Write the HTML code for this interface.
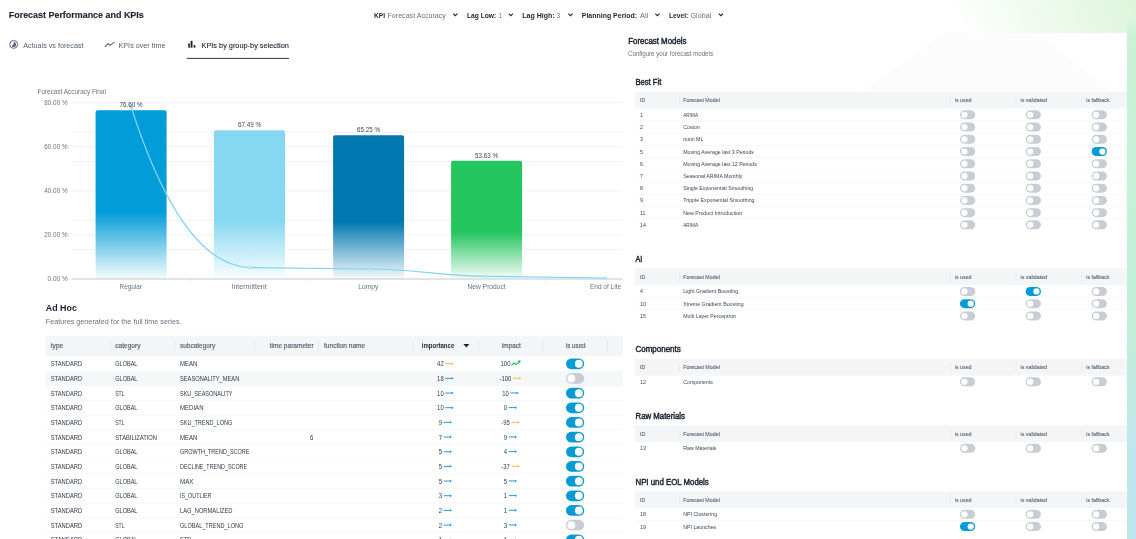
<!DOCTYPE html>
<html><head><meta charset="utf-8"><title>Forecast Performance and KPIs</title>
<style>
html,body{margin:0;padding:0}
body{width:1136px;height:539px;overflow:hidden;position:relative;font-family:"Liberation Sans", sans-serif;
background:#fff}
.band{position:absolute;left:900px;top:0;width:236px;height:33px;background:linear-gradient(68deg,#fff 0,#fff 24%,#ddf5da 100%)}
.strip{position:absolute;left:1127px;top:20px;width:9px;height:519px;
background:linear-gradient(to bottom, rgba(204,242,213,0) 0, #ccf2d5 14px, #c8f1d5 50px, #c3f0d8 250px, #c1ecdc 340px, #bfe6ee 430px, #bfe5f0 519px)}
.card{position:absolute;left:610px;top:32.8px;width:517px;height:520px;background:#fff}
.t{position:absolute;white-space:pre;line-height:1;}
.r{position:absolute}
svg.ov{position:absolute;left:0;top:0}
svg.tx{will-change:transform}
</style></head><body>
<div class="band"></div>
<div class="strip"></div>
<svg class="ov" width="1136" height="539" viewBox="0 0 1136 539">
<polygon points="944.5,33 1037,33 1112,91.5 862,91.5" fill="#fcfcfd"/>
</svg>

<svg class="ov" width="1136" height="539" viewBox="0 0 1136 539">
<defs><linearGradient id="g0" x1="0" y1="0" x2="0" y2="1"><stop offset="0" stop-color="#029cd8"/><stop offset="0.6" stop-color="#029cd8"/><stop offset="1" stop-color="#f7fcfe"/></linearGradient><linearGradient id="g1" x1="0" y1="0" x2="0" y2="1"><stop offset="0" stop-color="#86d7f1"/><stop offset="0.6" stop-color="#86d7f1"/><stop offset="1" stop-color="#fbfeff"/></linearGradient><linearGradient id="g2" x1="0" y1="0" x2="0" y2="1"><stop offset="0" stop-color="#0277b0"/><stop offset="0.6" stop-color="#0277b0"/><stop offset="1" stop-color="#f7fbfd"/></linearGradient><linearGradient id="g3" x1="0" y1="0" x2="0" y2="1"><stop offset="0" stop-color="#23c55e"/><stop offset="0.6" stop-color="#23c55e"/><stop offset="1" stop-color="#f8fdfa"/></linearGradient></defs>
<path d="M453.20 13.7 L455.30 15.7 L457.40 13.7" fill="none" stroke="#1c2330" stroke-width="1.1"/>
<path d="M508.70 13.7 L510.80 15.7 L512.90 13.7" fill="none" stroke="#1c2330" stroke-width="1.1"/>
<path d="M568.40 13.7 L570.50 15.7 L572.60 13.7" fill="none" stroke="#1c2330" stroke-width="1.1"/>
<path d="M655.30 13.7 L657.40 15.7 L659.50 13.7" fill="none" stroke="#1c2330" stroke-width="1.1"/>
<path d="M718.80 13.7 L720.90 15.7 L723.00 13.7" fill="none" stroke="#1c2330" stroke-width="1.1"/>
<rect x="186.90" y="57.90" width="102.10" height="0.95" fill="#232b3a"/>
<circle cx="13.65" cy="44.4" r="3.95" fill="none" stroke="#545f70" stroke-width="0.95"/><path d="M13.65 44.4 L13.65 41.9 A2.5 2.5 0 1 1 11.5 45.7 Z" fill="#545f70"/>
<path d="M105.3 46.6 L108.1 43.6 L110.2 45.3 L114.1 42.3" fill="none" stroke="#545f70" stroke-width="1.05" stroke-linejoin="round" stroke-linecap="round"/>
<rect x="188.2" y="43.4" width="1.6" height="4.3" fill="#1c2330"/><rect x="190.6" y="40.8" width="1.9" height="6.9" fill="#1c2330"/><rect x="193.7" y="45.0" width="1.6" height="2.7" fill="#1c2330"/>
<rect x="71.75" y="234.44" width="550.75" height="1.0" fill="#eef1f6"/>
<rect x="71.75" y="190.38" width="550.75" height="1.0" fill="#eef1f6"/>
<rect x="71.75" y="146.32" width="550.75" height="1.0" fill="#eef1f6"/>
<rect x="71.75" y="102.26" width="550.75" height="1.0" fill="#eef1f6"/>
<rect x="71.75" y="249.10" width="550.75" height="1.0" fill="#eef1f6"/>
<rect x="71.75" y="219.70" width="550.75" height="1.0" fill="#eef1f6"/>
<rect x="71.75" y="160.90" width="550.75" height="1.0" fill="#eef1f6"/>
<rect x="71.75" y="131.50" width="550.75" height="1.0" fill="#eef1f6"/>
<path d="M95.60 279.0 L95.60 112.25 Q95.60 110.25 97.60 110.25 L164.60 110.25 Q166.60 110.25 166.60 112.25 L166.60 279.0 Z" fill="url(#g0)"/>
<path d="M214.00 279.0 L214.00 132.32 Q214.00 130.32 216.00 130.32 L283.00 130.32 Q285.00 130.32 285.00 132.32 L285.00 279.0 Z" fill="url(#g1)"/>
<path d="M333.10 279.0 L333.10 137.25 Q333.10 135.25 335.10 135.25 L402.10 135.25 Q404.10 135.25 404.10 137.25 L404.10 279.0 Z" fill="url(#g2)"/>
<path d="M451.10 279.0 L451.10 162.85 Q451.10 160.85 453.10 160.85 L520.10 160.85 Q522.10 160.85 522.10 162.85 L522.10 279.0 Z" fill="url(#g3)"/>
<rect x="71.75" y="278.45" width="550.75" height="1.1" fill="#c9cdd3"/>
<rect x="189.85" y="279.0" width="0.8" height="1.6" fill="#c9cdd3"/>
<rect x="308.35" y="279.0" width="0.8" height="1.6" fill="#c9cdd3"/>
<rect x="426.85" y="279.0" width="0.8" height="1.6" fill="#c9cdd3"/>
<rect x="545.35" y="279.0" width="0.8" height="1.6" fill="#c9cdd3"/>
<path d="M130.5 105 C151 169.3 189.4 265.2 249.3 267.5 C290 268 330 268.6 368.25 269 C420 269.6 440 275.6 486.5 276.3 C530 277 570 277.8 605.5 278" fill="none" stroke="#7fd3f1" stroke-width="1.25"/>
<circle cx="130.5" cy="105" r="1.3" fill="#fff" stroke="#7fd3f1" stroke-width="0.8"/>
<circle cx="249.3" cy="267.5" r="1.3" fill="#fff" stroke="#7fd3f1" stroke-width="0.8"/>
<circle cx="368.25" cy="269" r="1.3" fill="#fff" stroke="#7fd3f1" stroke-width="0.8"/>
<circle cx="486.5" cy="276.3" r="1.3" fill="#fff" stroke="#7fd3f1" stroke-width="0.8"/>
<circle cx="605.5" cy="278" r="1.3" fill="#fff" stroke="#7fd3f1" stroke-width="0.8"/>
<rect x="45.75" y="335.80" width="577.25" height="20.60" fill="#f3f5f7"/>
<rect x="109.90" y="339.80" width="0.70" height="12.20" fill="#e3e6eb"/>
<rect x="174.40" y="339.80" width="0.70" height="12.20" fill="#e3e6eb"/>
<rect x="253.90" y="339.80" width="0.70" height="12.20" fill="#e3e6eb"/>
<rect x="317.90" y="339.80" width="0.70" height="12.20" fill="#e3e6eb"/>
<rect x="412.90" y="339.80" width="0.70" height="12.20" fill="#e3e6eb"/>
<rect x="477.90" y="339.80" width="0.70" height="12.20" fill="#e3e6eb"/>
<rect x="542.65" y="339.80" width="0.70" height="12.20" fill="#e3e6eb"/>
<rect x="607.15" y="339.80" width="0.70" height="12.20" fill="#e3e6eb"/>
<path d="M463.3 344.0 L469.4 344.0 L466.35 347.5 Z" fill="#1c2330"/>
<rect x="45.75" y="370.72" width="577.25" height="0.70" fill="#f3f4f6"/>
<rect x="445.30" y="363.20" width="7.2" height="1.0" fill="#f9bb44"/><path d="M451.60 362.25 L453.50 363.70 L451.60 365.15 Z" fill="#f9bb44"/>
<path d="M511.45 365.50 L514.05 363.00 L515.95 364.50 L519.05 361.90" fill="none" stroke="#22c55e" stroke-width="1.1" stroke-linejoin="round"/><rect x="518.15" y="360.40" width="2.3" height="2.3" fill="#22c55e"/>
<rect x="566.00" y="358.45" width="18.20" height="10.70" rx="5.35" fill="#049bd7"/><circle cx="578.85" cy="363.80" r="3.95" fill="#fff"/>
<rect x="45.75" y="371.07" width="577.25" height="14.67" fill="#f6f7f9"/>
<rect x="45.75" y="385.38" width="577.25" height="0.70" fill="#f3f4f6"/>
<rect x="445.30" y="377.87" width="7.2" height="1.0" fill="#1e9ddb"/><path d="M451.60 376.92 L453.50 378.37 L451.60 379.82 Z" fill="#1e9ddb"/>
<rect x="513.04" y="377.77" width="7.2" height="1.0" fill="#f9bb44"/><path d="M519.34 376.82 L521.24 378.27 L519.34 379.72 Z" fill="#f9bb44"/>
<rect x="566.00" y="373.12" width="18.20" height="10.70" rx="5.35" fill="#c8cdd3"/><circle cx="571.35" cy="378.47" r="3.95" fill="#fff"/>
<rect x="45.75" y="400.05" width="577.25" height="0.70" fill="#f3f4f6"/>
<rect x="445.30" y="392.53" width="7.2" height="1.0" fill="#1e9ddb"/><path d="M451.60 391.58 L453.50 393.03 L451.60 394.48 Z" fill="#1e9ddb"/>
<rect x="510.40" y="392.43" width="7.2" height="1.0" fill="#1e9ddb"/><path d="M516.70 391.48 L518.60 392.93 L516.70 394.38 Z" fill="#1e9ddb"/>
<rect x="566.00" y="387.78" width="18.20" height="10.70" rx="5.35" fill="#049bd7"/><circle cx="578.85" cy="393.13" r="3.95" fill="#fff"/>
<rect x="45.75" y="414.72" width="577.25" height="0.70" fill="#f3f4f6"/>
<rect x="445.30" y="407.20" width="7.2" height="1.0" fill="#1e9ddb"/><path d="M451.60 406.25 L453.50 407.70 L451.60 409.15 Z" fill="#1e9ddb"/>
<rect x="508.75" y="407.10" width="7.2" height="1.0" fill="#1e9ddb"/><path d="M515.05 406.15 L516.95 407.60 L515.05 409.05 Z" fill="#1e9ddb"/>
<rect x="566.00" y="402.45" width="18.20" height="10.70" rx="5.35" fill="#049bd7"/><circle cx="578.85" cy="407.80" r="3.95" fill="#fff"/>
<rect x="45.75" y="429.38" width="577.25" height="0.70" fill="#f3f4f6"/>
<rect x="443.65" y="421.87" width="7.2" height="1.0" fill="#1e9ddb"/><path d="M449.95 420.92 L451.85 422.37 L449.95 423.82 Z" fill="#1e9ddb"/>
<rect x="511.39" y="421.77" width="7.2" height="1.0" fill="#f9bb44"/><path d="M517.69 420.82 L519.59 422.27 L517.69 423.72 Z" fill="#f9bb44"/>
<rect x="566.00" y="417.12" width="18.20" height="10.70" rx="5.35" fill="#049bd7"/><circle cx="578.85" cy="422.47" r="3.95" fill="#fff"/>
<rect x="45.75" y="444.05" width="577.25" height="0.70" fill="#f3f4f6"/>
<rect x="443.65" y="436.53" width="7.2" height="1.0" fill="#1e9ddb"/><path d="M449.95 435.58 L451.85 437.03 L449.95 438.48 Z" fill="#1e9ddb"/>
<rect x="508.75" y="436.43" width="7.2" height="1.0" fill="#1e9ddb"/><path d="M515.05 435.48 L516.95 436.93 L515.05 438.38 Z" fill="#1e9ddb"/>
<rect x="566.00" y="431.78" width="18.20" height="10.70" rx="5.35" fill="#049bd7"/><circle cx="578.85" cy="437.13" r="3.95" fill="#fff"/>
<rect x="45.75" y="458.72" width="577.25" height="0.70" fill="#f3f4f6"/>
<rect x="443.65" y="451.20" width="7.2" height="1.0" fill="#1e9ddb"/><path d="M449.95 450.25 L451.85 451.70 L449.95 453.15 Z" fill="#1e9ddb"/>
<rect x="508.75" y="451.10" width="7.2" height="1.0" fill="#1e9ddb"/><path d="M515.05 450.15 L516.95 451.60 L515.05 453.05 Z" fill="#1e9ddb"/>
<rect x="566.00" y="446.45" width="18.20" height="10.70" rx="5.35" fill="#049bd7"/><circle cx="578.85" cy="451.80" r="3.95" fill="#fff"/>
<rect x="45.75" y="473.39" width="577.25" height="0.70" fill="#f3f4f6"/>
<rect x="443.65" y="465.87" width="7.2" height="1.0" fill="#1e9ddb"/><path d="M449.95 464.92 L451.85 466.37 L449.95 467.82 Z" fill="#1e9ddb"/>
<rect x="511.39" y="465.77" width="7.2" height="1.0" fill="#f9bb44"/><path d="M517.69 464.82 L519.59 466.27 L517.69 467.72 Z" fill="#f9bb44"/>
<rect x="566.00" y="461.12" width="18.20" height="10.70" rx="5.35" fill="#049bd7"/><circle cx="578.85" cy="466.47" r="3.95" fill="#fff"/>
<rect x="45.75" y="488.05" width="577.25" height="0.70" fill="#f3f4f6"/>
<rect x="443.65" y="480.54" width="7.2" height="1.0" fill="#1e9ddb"/><path d="M449.95 479.59 L451.85 481.04 L449.95 482.49 Z" fill="#1e9ddb"/>
<rect x="508.75" y="480.44" width="7.2" height="1.0" fill="#1e9ddb"/><path d="M515.05 479.49 L516.95 480.94 L515.05 482.39 Z" fill="#1e9ddb"/>
<rect x="566.00" y="475.79" width="18.20" height="10.70" rx="5.35" fill="#049bd7"/><circle cx="578.85" cy="481.14" r="3.95" fill="#fff"/>
<rect x="45.75" y="502.72" width="577.25" height="0.70" fill="#f3f4f6"/>
<rect x="443.65" y="495.20" width="7.2" height="1.0" fill="#1e9ddb"/><path d="M449.95 494.25 L451.85 495.70 L449.95 497.15 Z" fill="#1e9ddb"/>
<rect x="508.75" y="495.10" width="7.2" height="1.0" fill="#1e9ddb"/><path d="M515.05 494.15 L516.95 495.60 L515.05 497.05 Z" fill="#1e9ddb"/>
<rect x="566.00" y="490.45" width="18.20" height="10.70" rx="5.35" fill="#049bd7"/><circle cx="578.85" cy="495.80" r="3.95" fill="#fff"/>
<rect x="45.75" y="517.39" width="577.25" height="0.70" fill="#f3f4f6"/>
<rect x="443.65" y="509.87" width="7.2" height="1.0" fill="#1e9ddb"/><path d="M449.95 508.92 L451.85 510.37 L449.95 511.82 Z" fill="#1e9ddb"/>
<rect x="508.75" y="509.77" width="7.2" height="1.0" fill="#1e9ddb"/><path d="M515.05 508.82 L516.95 510.27 L515.05 511.72 Z" fill="#1e9ddb"/>
<rect x="566.00" y="505.12" width="18.20" height="10.70" rx="5.35" fill="#049bd7"/><circle cx="578.85" cy="510.47" r="3.95" fill="#fff"/>
<rect x="45.75" y="532.05" width="577.25" height="0.70" fill="#f3f4f6"/>
<rect x="443.65" y="524.54" width="7.2" height="1.0" fill="#1e9ddb"/><path d="M449.95 523.59 L451.85 525.04 L449.95 526.49 Z" fill="#1e9ddb"/>
<rect x="508.75" y="524.44" width="7.2" height="1.0" fill="#1e9ddb"/><path d="M515.05 523.49 L516.95 524.94 L515.05 526.39 Z" fill="#1e9ddb"/>
<rect x="566.00" y="519.79" width="18.20" height="10.70" rx="5.35" fill="#c8cdd3"/><circle cx="571.35" cy="525.14" r="3.95" fill="#fff"/>
<rect x="45.75" y="546.72" width="577.25" height="0.70" fill="#f3f4f6"/>
<rect x="443.65" y="539.20" width="7.2" height="1.0" fill="#1e9ddb"/><path d="M449.95 538.25 L451.85 539.70 L449.95 541.15 Z" fill="#1e9ddb"/>
<rect x="508.75" y="539.10" width="7.2" height="1.0" fill="#1e9ddb"/><path d="M515.05 538.15 L516.95 539.60 L515.05 541.05 Z" fill="#1e9ddb"/>
<rect x="566.00" y="534.45" width="18.20" height="10.70" rx="5.35" fill="#049bd7"/><circle cx="578.85" cy="539.80" r="3.95" fill="#fff"/>
<rect x="635.00" y="91.70" width="492.00" height="17.00" fill="#f3f5f7"/>
<rect x="678.95" y="95.10" width="0.60" height="10.20" fill="#e3e6eb"/>
<rect x="949.95" y="95.10" width="0.60" height="10.20" fill="#e3e6eb"/>
<rect x="1015.70" y="95.10" width="0.60" height="10.20" fill="#e3e6eb"/>
<rect x="1081.70" y="95.10" width="0.60" height="10.20" fill="#e3e6eb"/>
<rect x="635.00" y="120.62" width="492.00" height="0.60" fill="#f3f4f6"/>
<rect x="959.95" y="110.36" width="15.30" height="9.00" rx="4.50" fill="#c8cdd3"/><circle cx="964.45" cy="114.86" r="3.15" fill="#fff"/>
<rect x="1025.65" y="110.36" width="15.30" height="9.00" rx="4.50" fill="#c8cdd3"/><circle cx="1030.15" cy="114.86" r="3.15" fill="#fff"/>
<rect x="1091.65" y="110.36" width="15.30" height="9.00" rx="4.50" fill="#c8cdd3"/><circle cx="1096.15" cy="114.86" r="3.15" fill="#fff"/>
<rect x="635.00" y="132.84" width="492.00" height="0.60" fill="#f3f4f6"/>
<rect x="959.95" y="122.58" width="15.30" height="9.00" rx="4.50" fill="#c8cdd3"/><circle cx="964.45" cy="127.08" r="3.15" fill="#fff"/>
<rect x="1025.65" y="122.58" width="15.30" height="9.00" rx="4.50" fill="#c8cdd3"/><circle cx="1030.15" cy="127.08" r="3.15" fill="#fff"/>
<rect x="1091.65" y="122.58" width="15.30" height="9.00" rx="4.50" fill="#c8cdd3"/><circle cx="1096.15" cy="127.08" r="3.15" fill="#fff"/>
<rect x="635.00" y="145.07" width="492.00" height="0.60" fill="#f3f4f6"/>
<rect x="959.95" y="134.81" width="15.30" height="9.00" rx="4.50" fill="#c8cdd3"/><circle cx="964.45" cy="139.31" r="3.15" fill="#fff"/>
<rect x="1025.65" y="134.81" width="15.30" height="9.00" rx="4.50" fill="#c8cdd3"/><circle cx="1030.15" cy="139.31" r="3.15" fill="#fff"/>
<rect x="1091.65" y="134.81" width="15.30" height="9.00" rx="4.50" fill="#c8cdd3"/><circle cx="1096.15" cy="139.31" r="3.15" fill="#fff"/>
<rect x="635.00" y="157.29" width="492.00" height="0.60" fill="#f3f4f6"/>
<rect x="959.95" y="147.03" width="15.30" height="9.00" rx="4.50" fill="#c8cdd3"/><circle cx="964.45" cy="151.53" r="3.15" fill="#fff"/>
<rect x="1025.65" y="147.03" width="15.30" height="9.00" rx="4.50" fill="#c8cdd3"/><circle cx="1030.15" cy="151.53" r="3.15" fill="#fff"/>
<rect x="1091.65" y="147.03" width="15.30" height="9.00" rx="4.50" fill="#049bd7"/><circle cx="1102.45" cy="151.53" r="3.15" fill="#fff"/>
<rect x="635.00" y="169.51" width="492.00" height="0.60" fill="#f3f4f6"/>
<rect x="959.95" y="159.25" width="15.30" height="9.00" rx="4.50" fill="#c8cdd3"/><circle cx="964.45" cy="163.75" r="3.15" fill="#fff"/>
<rect x="1025.65" y="159.25" width="15.30" height="9.00" rx="4.50" fill="#c8cdd3"/><circle cx="1030.15" cy="163.75" r="3.15" fill="#fff"/>
<rect x="1091.65" y="159.25" width="15.30" height="9.00" rx="4.50" fill="#c8cdd3"/><circle cx="1096.15" cy="163.75" r="3.15" fill="#fff"/>
<rect x="635.00" y="181.73" width="492.00" height="0.60" fill="#f3f4f6"/>
<rect x="959.95" y="171.47" width="15.30" height="9.00" rx="4.50" fill="#c8cdd3"/><circle cx="964.45" cy="175.97" r="3.15" fill="#fff"/>
<rect x="1025.65" y="171.47" width="15.30" height="9.00" rx="4.50" fill="#c8cdd3"/><circle cx="1030.15" cy="175.97" r="3.15" fill="#fff"/>
<rect x="1091.65" y="171.47" width="15.30" height="9.00" rx="4.50" fill="#c8cdd3"/><circle cx="1096.15" cy="175.97" r="3.15" fill="#fff"/>
<rect x="635.00" y="193.95" width="492.00" height="0.60" fill="#f3f4f6"/>
<rect x="959.95" y="183.69" width="15.30" height="9.00" rx="4.50" fill="#c8cdd3"/><circle cx="964.45" cy="188.19" r="3.15" fill="#fff"/>
<rect x="1025.65" y="183.69" width="15.30" height="9.00" rx="4.50" fill="#c8cdd3"/><circle cx="1030.15" cy="188.19" r="3.15" fill="#fff"/>
<rect x="1091.65" y="183.69" width="15.30" height="9.00" rx="4.50" fill="#c8cdd3"/><circle cx="1096.15" cy="188.19" r="3.15" fill="#fff"/>
<rect x="635.00" y="206.18" width="492.00" height="0.60" fill="#f3f4f6"/>
<rect x="959.95" y="195.92" width="15.30" height="9.00" rx="4.50" fill="#c8cdd3"/><circle cx="964.45" cy="200.42" r="3.15" fill="#fff"/>
<rect x="1025.65" y="195.92" width="15.30" height="9.00" rx="4.50" fill="#c8cdd3"/><circle cx="1030.15" cy="200.42" r="3.15" fill="#fff"/>
<rect x="1091.65" y="195.92" width="15.30" height="9.00" rx="4.50" fill="#c8cdd3"/><circle cx="1096.15" cy="200.42" r="3.15" fill="#fff"/>
<rect x="635.00" y="218.40" width="492.00" height="0.60" fill="#f3f4f6"/>
<rect x="959.95" y="208.14" width="15.30" height="9.00" rx="4.50" fill="#c8cdd3"/><circle cx="964.45" cy="212.64" r="3.15" fill="#fff"/>
<rect x="1025.65" y="208.14" width="15.30" height="9.00" rx="4.50" fill="#c8cdd3"/><circle cx="1030.15" cy="212.64" r="3.15" fill="#fff"/>
<rect x="1091.65" y="208.14" width="15.30" height="9.00" rx="4.50" fill="#c8cdd3"/><circle cx="1096.15" cy="212.64" r="3.15" fill="#fff"/>
<rect x="959.95" y="220.36" width="15.30" height="9.00" rx="4.50" fill="#c8cdd3"/><circle cx="964.45" cy="224.86" r="3.15" fill="#fff"/>
<rect x="1025.65" y="220.36" width="15.30" height="9.00" rx="4.50" fill="#c8cdd3"/><circle cx="1030.15" cy="224.86" r="3.15" fill="#fff"/>
<rect x="1091.65" y="220.36" width="15.30" height="9.00" rx="4.50" fill="#c8cdd3"/><circle cx="1096.15" cy="224.86" r="3.15" fill="#fff"/>
<rect x="635.00" y="268.30" width="492.00" height="17.00" fill="#f3f5f7"/>
<rect x="678.95" y="271.70" width="0.60" height="10.20" fill="#e3e6eb"/>
<rect x="949.95" y="271.70" width="0.60" height="10.20" fill="#e3e6eb"/>
<rect x="1015.70" y="271.70" width="0.60" height="10.20" fill="#e3e6eb"/>
<rect x="1081.70" y="271.70" width="0.60" height="10.20" fill="#e3e6eb"/>
<rect x="635.00" y="297.22" width="492.00" height="0.60" fill="#f3f4f6"/>
<rect x="959.95" y="286.96" width="15.30" height="9.00" rx="4.50" fill="#c8cdd3"/><circle cx="964.45" cy="291.46" r="3.15" fill="#fff"/>
<rect x="1025.65" y="286.96" width="15.30" height="9.00" rx="4.50" fill="#049bd7"/><circle cx="1036.45" cy="291.46" r="3.15" fill="#fff"/>
<rect x="1091.65" y="286.96" width="15.30" height="9.00" rx="4.50" fill="#c8cdd3"/><circle cx="1096.15" cy="291.46" r="3.15" fill="#fff"/>
<rect x="635.00" y="309.44" width="492.00" height="0.60" fill="#f3f4f6"/>
<rect x="959.95" y="299.18" width="15.30" height="9.00" rx="4.50" fill="#049bd7"/><circle cx="970.75" cy="303.68" r="3.15" fill="#fff"/>
<rect x="1025.65" y="299.18" width="15.30" height="9.00" rx="4.50" fill="#c8cdd3"/><circle cx="1030.15" cy="303.68" r="3.15" fill="#fff"/>
<rect x="1091.65" y="299.18" width="15.30" height="9.00" rx="4.50" fill="#c8cdd3"/><circle cx="1096.15" cy="303.68" r="3.15" fill="#fff"/>
<rect x="959.95" y="311.41" width="15.30" height="9.00" rx="4.50" fill="#c8cdd3"/><circle cx="964.45" cy="315.91" r="3.15" fill="#fff"/>
<rect x="1025.65" y="311.41" width="15.30" height="9.00" rx="4.50" fill="#c8cdd3"/><circle cx="1030.15" cy="315.91" r="3.15" fill="#fff"/>
<rect x="1091.65" y="311.41" width="15.30" height="9.00" rx="4.50" fill="#c8cdd3"/><circle cx="1096.15" cy="315.91" r="3.15" fill="#fff"/>
<rect x="635.00" y="358.70" width="492.00" height="17.00" fill="#f3f5f7"/>
<rect x="678.95" y="362.10" width="0.60" height="10.20" fill="#e3e6eb"/>
<rect x="949.95" y="362.10" width="0.60" height="10.20" fill="#e3e6eb"/>
<rect x="1015.70" y="362.10" width="0.60" height="10.20" fill="#e3e6eb"/>
<rect x="1081.70" y="362.10" width="0.60" height="10.20" fill="#e3e6eb"/>
<rect x="959.95" y="377.36" width="15.30" height="9.00" rx="4.50" fill="#c8cdd3"/><circle cx="964.45" cy="381.86" r="3.15" fill="#fff"/>
<rect x="1025.65" y="377.36" width="15.30" height="9.00" rx="4.50" fill="#c8cdd3"/><circle cx="1030.15" cy="381.86" r="3.15" fill="#fff"/>
<rect x="1091.65" y="377.36" width="15.30" height="9.00" rx="4.50" fill="#c8cdd3"/><circle cx="1096.15" cy="381.86" r="3.15" fill="#fff"/>
<rect x="635.00" y="425.20" width="492.00" height="17.00" fill="#f3f5f7"/>
<rect x="678.95" y="428.60" width="0.60" height="10.20" fill="#e3e6eb"/>
<rect x="949.95" y="428.60" width="0.60" height="10.20" fill="#e3e6eb"/>
<rect x="1015.70" y="428.60" width="0.60" height="10.20" fill="#e3e6eb"/>
<rect x="1081.70" y="428.60" width="0.60" height="10.20" fill="#e3e6eb"/>
<rect x="959.95" y="443.86" width="15.30" height="9.00" rx="4.50" fill="#c8cdd3"/><circle cx="964.45" cy="448.36" r="3.15" fill="#fff"/>
<rect x="1025.65" y="443.86" width="15.30" height="9.00" rx="4.50" fill="#c8cdd3"/><circle cx="1030.15" cy="448.36" r="3.15" fill="#fff"/>
<rect x="1091.65" y="443.86" width="15.30" height="9.00" rx="4.50" fill="#c8cdd3"/><circle cx="1096.15" cy="448.36" r="3.15" fill="#fff"/>
<rect x="635.00" y="491.20" width="492.00" height="17.00" fill="#f3f5f7"/>
<rect x="678.95" y="494.60" width="0.60" height="10.20" fill="#e3e6eb"/>
<rect x="949.95" y="494.60" width="0.60" height="10.20" fill="#e3e6eb"/>
<rect x="1015.70" y="494.60" width="0.60" height="10.20" fill="#e3e6eb"/>
<rect x="1081.70" y="494.60" width="0.60" height="10.20" fill="#e3e6eb"/>
<rect x="635.00" y="520.12" width="492.00" height="0.60" fill="#f3f4f6"/>
<rect x="959.95" y="509.86" width="15.30" height="9.00" rx="4.50" fill="#c8cdd3"/><circle cx="964.45" cy="514.36" r="3.15" fill="#fff"/>
<rect x="1025.65" y="509.86" width="15.30" height="9.00" rx="4.50" fill="#c8cdd3"/><circle cx="1030.15" cy="514.36" r="3.15" fill="#fff"/>
<rect x="1091.65" y="509.86" width="15.30" height="9.00" rx="4.50" fill="#c8cdd3"/><circle cx="1096.15" cy="514.36" r="3.15" fill="#fff"/>
<rect x="959.95" y="522.08" width="15.30" height="9.00" rx="4.50" fill="#049bd7"/><circle cx="970.75" cy="526.58" r="3.15" fill="#fff"/>
<rect x="1025.65" y="522.08" width="15.30" height="9.00" rx="4.50" fill="#c8cdd3"/><circle cx="1030.15" cy="526.58" r="3.15" fill="#fff"/>
<rect x="1091.65" y="522.08" width="15.30" height="9.00" rx="4.50" fill="#c8cdd3"/><circle cx="1096.15" cy="526.58" r="3.15" fill="#fff"/>
</svg>
<svg class="ov tx" width="1136" height="539" viewBox="0 0 1136 539" font-family='"Liberation Sans", sans-serif'>
<text x="8.75" y="18.25" font-size="9.0" font-weight="700" fill="#1c2330" text-anchor="start" textLength="135.00" lengthAdjust="spacingAndGlyphs" stroke="#1c2330" stroke-width="0.15">Forecast Performance and KPIs</text>
<text transform="translate(374.00 17.50) scale(0.8682 1)" font-size="7.6" font-weight="700" fill="#1c2330" text-anchor="start">KPI</text>
<text transform="translate(387.50 17.50) scale(0.9356 1)" font-size="7.6" fill="#61718a" text-anchor="start">Forecast Accuracy</text>
<text transform="translate(466.90 17.50) scale(0.8844 1)" font-size="7.6" font-weight="700" fill="#1c2330" text-anchor="start">Lag Low:</text>
<text transform="translate(498.40 17.50) scale(0.8000 1)" font-size="7.6" fill="#61718a" text-anchor="start">1</text>
<text transform="translate(522.25 17.50) scale(0.9274 1)" font-size="7.6" font-weight="700" fill="#1c2330" text-anchor="start">Lag High:</text>
<text transform="translate(556.50 17.50) scale(0.8500 1)" font-size="7.6" fill="#61718a" text-anchor="start">3</text>
<text transform="translate(581.75 17.50) scale(0.9191 1)" font-size="7.6" font-weight="700" fill="#1c2330" text-anchor="start">Planning Period:</text>
<text transform="translate(640.00 17.50) scale(0.9762 1)" font-size="7.6" fill="#61718a" text-anchor="start">All</text>
<text transform="translate(669.00 17.50) scale(0.8761 1)" font-size="7.6" font-weight="700" fill="#1c2330" text-anchor="start">Level:</text>
<text transform="translate(690.50 17.50) scale(0.9444 1)" font-size="7.6" fill="#61718a" text-anchor="start">Global</text>
<text transform="translate(23.20 47.70) scale(0.9363 1)" font-size="7.7" fill="#545f70" text-anchor="start">Actuals vs forecast</text>
<text transform="translate(118.50 47.70) scale(0.9386 1)" font-size="7.7" fill="#545f70" text-anchor="start">KPIs over time</text>
<text transform="translate(201.50 47.70) scale(0.9553 1)" font-size="7.7" fill="#1c2330" text-anchor="start" stroke="#1c2330" stroke-width="0.12">KPIs by group-by selection</text>
<text transform="translate(37.50 94.25) scale(0.9580 1)" font-size="6.7" fill="#6a717e" text-anchor="start">Forecast Accuracy Final</text>
<text x="67.60" y="281.35" font-size="6.6" fill="#6a717e" text-anchor="end" textLength="20.00" lengthAdjust="spacingAndGlyphs">0.00 %</text>
<text x="67.60" y="237.29" font-size="6.6" fill="#6a717e" text-anchor="end" textLength="23.30" lengthAdjust="spacingAndGlyphs">20.00 %</text>
<text x="67.60" y="193.23" font-size="6.6" fill="#6a717e" text-anchor="end" textLength="23.30" lengthAdjust="spacingAndGlyphs">40.00 %</text>
<text x="67.60" y="149.17" font-size="6.6" fill="#6a717e" text-anchor="end" textLength="23.30" lengthAdjust="spacingAndGlyphs">60.00 %</text>
<text x="67.60" y="105.11" font-size="6.6" fill="#6a717e" text-anchor="end" textLength="23.30" lengthAdjust="spacingAndGlyphs">80.00 %</text>
<text transform="translate(131.10 106.95) scale(0.9500 1)" font-size="6.6" fill="#3a4353" text-anchor="middle">76.60 %</text>
<text transform="translate(249.50 127.02) scale(0.9500 1)" font-size="6.6" fill="#3a4353" text-anchor="middle">67.49 %</text>
<text transform="translate(368.60 131.95) scale(0.9500 1)" font-size="6.6" fill="#3a4353" text-anchor="middle">65.25 %</text>
<text transform="translate(486.60 157.55) scale(0.9500 1)" font-size="6.6" fill="#3a4353" text-anchor="middle">53.63 %</text>
<text x="130.75" y="288.90" font-size="6.9" fill="#6a717e" text-anchor="middle" textLength="22.50" lengthAdjust="spacingAndGlyphs">Regular</text>
<text x="249.10" y="288.90" font-size="6.9" fill="#6a717e" text-anchor="middle" textLength="35.25" lengthAdjust="spacingAndGlyphs">Intermittent</text>
<text x="368.25" y="288.90" font-size="6.9" fill="#6a717e" text-anchor="middle" textLength="20.00" lengthAdjust="spacingAndGlyphs">Lumpy</text>
<text x="486.60" y="288.90" font-size="6.9" fill="#6a717e" text-anchor="middle" textLength="38.25" lengthAdjust="spacingAndGlyphs">New Product</text>
<text x="605.50" y="288.90" font-size="6.9" fill="#6a717e" text-anchor="middle" textLength="31.00" lengthAdjust="spacingAndGlyphs">End of Life</text>
<text transform="translate(45.75 311.25) scale(0.9921 1)" font-size="9.0" font-weight="700" fill="#1c2330" text-anchor="start">Ad Hoc</text>
<text transform="translate(45.75 324.30) scale(0.9542 1)" font-size="7.6" fill="#6a717e" text-anchor="start">Features generated for the full time series.</text>
<text x="50.75" y="348.25" font-size="6.9" fill="#545f70" text-anchor="start" textLength="12.50" lengthAdjust="spacingAndGlyphs" stroke="#545f70" stroke-width="0.18">type</text>
<text x="115.25" y="348.25" font-size="6.9" fill="#545f70" text-anchor="start" textLength="25.25" lengthAdjust="spacingAndGlyphs" stroke="#545f70" stroke-width="0.18">category</text>
<text x="180.00" y="348.25" font-size="6.9" fill="#545f70" text-anchor="start" textLength="35.25" lengthAdjust="spacingAndGlyphs" stroke="#545f70" stroke-width="0.18">subcategory</text>
<text x="313.70" y="348.25" font-size="6.9" fill="#545f70" text-anchor="end" textLength="44.00" lengthAdjust="spacingAndGlyphs" stroke="#545f70" stroke-width="0.18">time parameter</text>
<text x="324.00" y="348.25" font-size="6.9" fill="#545f70" text-anchor="start" textLength="41.25" lengthAdjust="spacingAndGlyphs" stroke="#545f70" stroke-width="0.18">function name</text>
<text x="421.75" y="348.25" font-size="6.9" font-weight="700" fill="#1c2330" text-anchor="start" textLength="32.50" lengthAdjust="spacingAndGlyphs">importance</text>
<text x="511.40" y="348.25" font-size="6.9" fill="#545f70" text-anchor="middle" textLength="19.00" lengthAdjust="spacingAndGlyphs" stroke="#545f70" stroke-width="0.18">impact</text>
<text x="575.70" y="348.25" font-size="6.9" fill="#545f70" text-anchor="middle" textLength="19.80" lengthAdjust="spacingAndGlyphs" stroke="#545f70" stroke-width="0.18">is used</text>
<text x="50.75" y="366.45" font-size="6.9" fill="#2f3848" text-anchor="start" textLength="31.50" lengthAdjust="spacingAndGlyphs">STANDARD</text>
<text x="115.25" y="366.45" font-size="6.9" fill="#2f3848" text-anchor="start" textLength="22.20" lengthAdjust="spacingAndGlyphs">GLOBAL</text>
<text x="180.00" y="366.45" font-size="6.9" fill="#2f3848" text-anchor="start" textLength="17.40" lengthAdjust="spacingAndGlyphs">MEAN</text>
<text transform="translate(437.10 366.45) scale(0.8600 1)" font-size="6.9" fill="#2f3848" text-anchor="start">42</text>
<text transform="translate(500.55 366.45) scale(0.8600 1)" font-size="6.9" fill="#2f3848" text-anchor="start">100</text>
<text x="50.75" y="381.12" font-size="6.9" fill="#2f3848" text-anchor="start" textLength="31.50" lengthAdjust="spacingAndGlyphs">STANDARD</text>
<text x="115.25" y="381.12" font-size="6.9" fill="#2f3848" text-anchor="start" textLength="22.20" lengthAdjust="spacingAndGlyphs">GLOBAL</text>
<text x="180.00" y="381.12" font-size="6.9" fill="#2f3848" text-anchor="start" textLength="59.25" lengthAdjust="spacingAndGlyphs">SEASONALITY_MEAN</text>
<text transform="translate(437.10 381.12) scale(0.8600 1)" font-size="6.9" fill="#2f3848" text-anchor="start">18</text>
<text transform="translate(499.56 381.12) scale(0.8600 1)" font-size="6.9" fill="#2f3848" text-anchor="start">-100</text>
<text x="50.75" y="395.78" font-size="6.9" fill="#2f3848" text-anchor="start" textLength="31.50" lengthAdjust="spacingAndGlyphs">STANDARD</text>
<text x="115.25" y="395.78" font-size="6.9" fill="#2f3848" text-anchor="start" textLength="9.20" lengthAdjust="spacingAndGlyphs">STL</text>
<text x="180.00" y="395.78" font-size="6.9" fill="#2f3848" text-anchor="start" textLength="52.50" lengthAdjust="spacingAndGlyphs">SKU_SEASONALITY</text>
<text transform="translate(437.10 395.78) scale(0.8600 1)" font-size="6.9" fill="#2f3848" text-anchor="start">10</text>
<text transform="translate(502.20 395.78) scale(0.8600 1)" font-size="6.9" fill="#2f3848" text-anchor="start">10</text>
<text x="50.75" y="410.45" font-size="6.9" fill="#2f3848" text-anchor="start" textLength="31.50" lengthAdjust="spacingAndGlyphs">STANDARD</text>
<text x="115.25" y="410.45" font-size="6.9" fill="#2f3848" text-anchor="start" textLength="22.20" lengthAdjust="spacingAndGlyphs">GLOBAL</text>
<text x="180.00" y="410.45" font-size="6.9" fill="#2f3848" text-anchor="start" textLength="23.50" lengthAdjust="spacingAndGlyphs">MEDIAN</text>
<text transform="translate(437.10 410.45) scale(0.8600 1)" font-size="6.9" fill="#2f3848" text-anchor="start">10</text>
<text transform="translate(503.85 410.45) scale(0.8600 1)" font-size="6.9" fill="#2f3848" text-anchor="start">0</text>
<text x="50.75" y="425.12" font-size="6.9" fill="#2f3848" text-anchor="start" textLength="31.50" lengthAdjust="spacingAndGlyphs">STANDARD</text>
<text x="115.25" y="425.12" font-size="6.9" fill="#2f3848" text-anchor="start" textLength="9.20" lengthAdjust="spacingAndGlyphs">STL</text>
<text x="180.00" y="425.12" font-size="6.9" fill="#2f3848" text-anchor="start" textLength="52.30" lengthAdjust="spacingAndGlyphs">SKU_TREND_LONG</text>
<text transform="translate(438.75 425.12) scale(0.8600 1)" font-size="6.9" fill="#2f3848" text-anchor="start">9</text>
<text transform="translate(501.21 425.12) scale(0.8600 1)" font-size="6.9" fill="#2f3848" text-anchor="start">-95</text>
<text x="50.75" y="439.78" font-size="6.9" fill="#2f3848" text-anchor="start" textLength="31.50" lengthAdjust="spacingAndGlyphs">STANDARD</text>
<text x="115.25" y="439.78" font-size="6.9" fill="#2f3848" text-anchor="start" textLength="41.70" lengthAdjust="spacingAndGlyphs">STABILIZATION</text>
<text x="180.00" y="439.78" font-size="6.9" fill="#2f3848" text-anchor="start" textLength="17.40" lengthAdjust="spacingAndGlyphs">MEAN</text>
<text transform="translate(313.30 439.78) scale(0.8600 1)" font-size="6.9" fill="#2f3848" text-anchor="end">6</text>
<text transform="translate(438.75 439.78) scale(0.8600 1)" font-size="6.9" fill="#2f3848" text-anchor="start">7</text>
<text transform="translate(503.85 439.78) scale(0.8600 1)" font-size="6.9" fill="#2f3848" text-anchor="start">9</text>
<text x="50.75" y="454.45" font-size="6.9" fill="#2f3848" text-anchor="start" textLength="31.50" lengthAdjust="spacingAndGlyphs">STANDARD</text>
<text x="115.25" y="454.45" font-size="6.9" fill="#2f3848" text-anchor="start" textLength="22.20" lengthAdjust="spacingAndGlyphs">GLOBAL</text>
<text x="180.00" y="454.45" font-size="6.9" fill="#2f3848" text-anchor="start" textLength="69.40" lengthAdjust="spacingAndGlyphs">GROWTH_TREND_SCORE</text>
<text transform="translate(438.75 454.45) scale(0.8600 1)" font-size="6.9" fill="#2f3848" text-anchor="start">5</text>
<text transform="translate(503.85 454.45) scale(0.8600 1)" font-size="6.9" fill="#2f3848" text-anchor="start">4</text>
<text x="50.75" y="469.12" font-size="6.9" fill="#2f3848" text-anchor="start" textLength="31.50" lengthAdjust="spacingAndGlyphs">STANDARD</text>
<text x="115.25" y="469.12" font-size="6.9" fill="#2f3848" text-anchor="start" textLength="22.20" lengthAdjust="spacingAndGlyphs">GLOBAL</text>
<text x="180.00" y="469.12" font-size="6.9" fill="#2f3848" text-anchor="start" textLength="67.10" lengthAdjust="spacingAndGlyphs">DECLINE_TREND_SCORE</text>
<text transform="translate(438.75 469.12) scale(0.8600 1)" font-size="6.9" fill="#2f3848" text-anchor="start">5</text>
<text transform="translate(501.21 469.12) scale(0.8600 1)" font-size="6.9" fill="#2f3848" text-anchor="start">-37</text>
<text x="50.75" y="483.79" font-size="6.9" fill="#2f3848" text-anchor="start" textLength="31.50" lengthAdjust="spacingAndGlyphs">STANDARD</text>
<text x="115.25" y="483.79" font-size="6.9" fill="#2f3848" text-anchor="start" textLength="22.20" lengthAdjust="spacingAndGlyphs">GLOBAL</text>
<text x="180.00" y="483.79" font-size="6.9" fill="#2f3848" text-anchor="start" textLength="13.50" lengthAdjust="spacingAndGlyphs">MAX</text>
<text transform="translate(438.75 483.79) scale(0.8600 1)" font-size="6.9" fill="#2f3848" text-anchor="start">5</text>
<text transform="translate(503.85 483.79) scale(0.8600 1)" font-size="6.9" fill="#2f3848" text-anchor="start">5</text>
<text x="50.75" y="498.45" font-size="6.9" fill="#2f3848" text-anchor="start" textLength="31.50" lengthAdjust="spacingAndGlyphs">STANDARD</text>
<text x="115.25" y="498.45" font-size="6.9" fill="#2f3848" text-anchor="start" textLength="22.20" lengthAdjust="spacingAndGlyphs">GLOBAL</text>
<text x="180.00" y="498.45" font-size="6.9" fill="#2f3848" text-anchor="start" textLength="31.40" lengthAdjust="spacingAndGlyphs">IS_OUTLIER</text>
<text transform="translate(438.75 498.45) scale(0.8600 1)" font-size="6.9" fill="#2f3848" text-anchor="start">3</text>
<text transform="translate(503.85 498.45) scale(0.8600 1)" font-size="6.9" fill="#2f3848" text-anchor="start">1</text>
<text x="50.75" y="513.12" font-size="6.9" fill="#2f3848" text-anchor="start" textLength="31.50" lengthAdjust="spacingAndGlyphs">STANDARD</text>
<text x="115.25" y="513.12" font-size="6.9" fill="#2f3848" text-anchor="start" textLength="22.20" lengthAdjust="spacingAndGlyphs">GLOBAL</text>
<text x="180.00" y="513.12" font-size="6.9" fill="#2f3848" text-anchor="start" textLength="52.50" lengthAdjust="spacingAndGlyphs">LAG_NORMALIZED</text>
<text transform="translate(438.75 513.12) scale(0.8600 1)" font-size="6.9" fill="#2f3848" text-anchor="start">2</text>
<text transform="translate(503.85 513.12) scale(0.8600 1)" font-size="6.9" fill="#2f3848" text-anchor="start">1</text>
<text x="50.75" y="527.79" font-size="6.9" fill="#2f3848" text-anchor="start" textLength="31.50" lengthAdjust="spacingAndGlyphs">STANDARD</text>
<text x="115.25" y="527.79" font-size="6.9" fill="#2f3848" text-anchor="start" textLength="9.20" lengthAdjust="spacingAndGlyphs">STL</text>
<text x="180.00" y="527.79" font-size="6.9" fill="#2f3848" text-anchor="start" textLength="63.40" lengthAdjust="spacingAndGlyphs">GLOBAL_TREND_LONG</text>
<text transform="translate(438.75 527.79) scale(0.8600 1)" font-size="6.9" fill="#2f3848" text-anchor="start">2</text>
<text transform="translate(503.85 527.79) scale(0.8600 1)" font-size="6.9" fill="#2f3848" text-anchor="start">3</text>
<text x="50.75" y="542.45" font-size="6.9" fill="#2f3848" text-anchor="start" textLength="31.50" lengthAdjust="spacingAndGlyphs">STANDARD</text>
<text x="115.25" y="542.45" font-size="6.9" fill="#2f3848" text-anchor="start" textLength="22.20" lengthAdjust="spacingAndGlyphs">GLOBAL</text>
<text x="180.00" y="542.45" font-size="6.9" fill="#2f3848" text-anchor="start" textLength="11.50" lengthAdjust="spacingAndGlyphs">STD</text>
<text transform="translate(438.75 542.45) scale(0.8600 1)" font-size="6.9" fill="#2f3848" text-anchor="start">1</text>
<text transform="translate(503.85 542.45) scale(0.8600 1)" font-size="6.9" fill="#2f3848" text-anchor="start">1</text>
<text x="628.25" y="44.00" font-size="8.3" fill="#1c2330" text-anchor="start" textLength="58.25" lengthAdjust="spacingAndGlyphs" stroke="#1c2330" stroke-width="0.45">Forecast Models</text>
<text transform="translate(628.00 55.90) scale(0.9438 1)" font-size="6.5" fill="#6a717e" text-anchor="start">Configure your forecast models</text>
<text x="635.50" y="85.30" font-size="8.3" fill="#1c2330" text-anchor="start" textLength="25.75" lengthAdjust="spacingAndGlyphs" stroke="#1c2330" stroke-width="0.45">Best Fit</text>
<text transform="translate(640.00 102.20) scale(0.9000 1)" font-size="5.9" fill="#545f70" text-anchor="start" stroke="#545f70" stroke-width="0.1">ID</text>
<text transform="translate(683.25 102.20) scale(0.9000 1)" font-size="5.9" fill="#545f70" text-anchor="start" stroke="#545f70" stroke-width="0.1">Forecast Model</text>
<text transform="translate(954.75 102.20) scale(0.9000 1)" font-size="5.9" fill="#545f70" text-anchor="start" stroke="#545f70" stroke-width="0.1">is used</text>
<text transform="translate(1020.50 102.20) scale(0.9000 1)" font-size="5.9" fill="#545f70" text-anchor="start" stroke="#545f70" stroke-width="0.1">is validated</text>
<text transform="translate(1086.25 102.20) scale(0.9000 1)" font-size="5.9" fill="#545f70" text-anchor="start" stroke="#545f70" stroke-width="0.1">is fallback</text>
<text transform="translate(640.00 116.86) scale(0.8900 1)" font-size="5.9" fill="#3c4554" text-anchor="start">1</text>
<text x="683.25" y="116.86" font-size="5.9" fill="#3c4554" text-anchor="start" textLength="14.75" lengthAdjust="spacingAndGlyphs">ARIMA</text>
<text transform="translate(640.00 129.08) scale(0.8900 1)" font-size="5.9" fill="#3c4554" text-anchor="start">2</text>
<text transform="translate(683.25 129.08) scale(0.8900 1)" font-size="5.9" fill="#3c4554" text-anchor="start">Coston</text>
<text transform="translate(640.00 141.31) scale(0.8900 1)" font-size="5.9" fill="#3c4554" text-anchor="start">3</text>
<text transform="translate(683.25 141.31) scale(0.8900 1)" font-size="5.9" fill="#3c4554" text-anchor="start">numi ML</text>
<text transform="translate(640.00 153.53) scale(0.8900 1)" font-size="5.9" fill="#3c4554" text-anchor="start">5</text>
<text transform="translate(683.25 153.53) scale(0.8900 1)" font-size="5.9" fill="#3c4554" text-anchor="start">Moving Average last 3 Periods</text>
<text transform="translate(640.00 165.75) scale(0.8900 1)" font-size="5.9" fill="#3c4554" text-anchor="start">6</text>
<text transform="translate(683.25 165.75) scale(0.8900 1)" font-size="5.9" fill="#3c4554" text-anchor="start">Moving Average last 12 Periods</text>
<text transform="translate(640.00 177.97) scale(0.8900 1)" font-size="5.9" fill="#3c4554" text-anchor="start">7</text>
<text transform="translate(683.25 177.97) scale(0.8900 1)" font-size="5.9" fill="#3c4554" text-anchor="start">Seasonal ARIMA Monthly</text>
<text transform="translate(640.00 190.19) scale(0.8900 1)" font-size="5.9" fill="#3c4554" text-anchor="start">8</text>
<text transform="translate(683.25 190.19) scale(0.8900 1)" font-size="5.9" fill="#3c4554" text-anchor="start">Single Exponential Smoothing</text>
<text transform="translate(640.00 202.42) scale(0.8900 1)" font-size="5.9" fill="#3c4554" text-anchor="start">9</text>
<text transform="translate(683.25 202.42) scale(0.8900 1)" font-size="5.9" fill="#3c4554" text-anchor="start">Tripple Exponential Smoothing</text>
<text transform="translate(640.00 214.64) scale(0.8900 1)" font-size="5.9" fill="#3c4554" text-anchor="start">11</text>
<text transform="translate(683.25 214.64) scale(0.8900 1)" font-size="5.9" fill="#3c4554" text-anchor="start">New Product Introduction</text>
<text transform="translate(640.00 226.86) scale(0.8900 1)" font-size="5.9" fill="#3c4554" text-anchor="start">14</text>
<text x="683.25" y="226.86" font-size="5.9" fill="#3c4554" text-anchor="start" textLength="14.75" lengthAdjust="spacingAndGlyphs">ARIMA</text>
<text x="635.50" y="262.05" font-size="8.3" fill="#1c2330" text-anchor="start" textLength="6.75" lengthAdjust="spacingAndGlyphs" stroke="#1c2330" stroke-width="0.45">AI</text>
<text transform="translate(640.00 278.80) scale(0.9000 1)" font-size="5.9" fill="#545f70" text-anchor="start" stroke="#545f70" stroke-width="0.1">ID</text>
<text transform="translate(683.25 278.80) scale(0.9000 1)" font-size="5.9" fill="#545f70" text-anchor="start" stroke="#545f70" stroke-width="0.1">Forecast Model</text>
<text transform="translate(954.75 278.80) scale(0.9000 1)" font-size="5.9" fill="#545f70" text-anchor="start" stroke="#545f70" stroke-width="0.1">is used</text>
<text transform="translate(1020.50 278.80) scale(0.9000 1)" font-size="5.9" fill="#545f70" text-anchor="start" stroke="#545f70" stroke-width="0.1">is validated</text>
<text transform="translate(1086.25 278.80) scale(0.9000 1)" font-size="5.9" fill="#545f70" text-anchor="start" stroke="#545f70" stroke-width="0.1">is fallback</text>
<text transform="translate(640.00 293.46) scale(0.8900 1)" font-size="5.9" fill="#3c4554" text-anchor="start">4</text>
<text transform="translate(683.25 293.46) scale(0.8900 1)" font-size="5.9" fill="#3c4554" text-anchor="start">Light Gradient Boosting</text>
<text transform="translate(640.00 305.68) scale(0.8900 1)" font-size="5.9" fill="#3c4554" text-anchor="start">10</text>
<text transform="translate(683.25 305.68) scale(0.8900 1)" font-size="5.9" fill="#3c4554" text-anchor="start">Xtreme Gradient Boosting</text>
<text transform="translate(640.00 317.91) scale(0.8900 1)" font-size="5.9" fill="#3c4554" text-anchor="start">15</text>
<text transform="translate(683.25 317.91) scale(0.8900 1)" font-size="5.9" fill="#3c4554" text-anchor="start">Multi Layer Perceptron</text>
<text x="635.50" y="352.30" font-size="8.3" fill="#1c2330" text-anchor="start" textLength="45.25" lengthAdjust="spacingAndGlyphs" stroke="#1c2330" stroke-width="0.45">Components</text>
<text transform="translate(640.00 369.20) scale(0.9000 1)" font-size="5.9" fill="#545f70" text-anchor="start" stroke="#545f70" stroke-width="0.1">ID</text>
<text transform="translate(683.25 369.20) scale(0.9000 1)" font-size="5.9" fill="#545f70" text-anchor="start" stroke="#545f70" stroke-width="0.1">Forecast Model</text>
<text transform="translate(954.75 369.20) scale(0.9000 1)" font-size="5.9" fill="#545f70" text-anchor="start" stroke="#545f70" stroke-width="0.1">is used</text>
<text transform="translate(1020.50 369.20) scale(0.9000 1)" font-size="5.9" fill="#545f70" text-anchor="start" stroke="#545f70" stroke-width="0.1">is validated</text>
<text transform="translate(1086.25 369.20) scale(0.9000 1)" font-size="5.9" fill="#545f70" text-anchor="start" stroke="#545f70" stroke-width="0.1">is fallback</text>
<text transform="translate(640.00 383.86) scale(0.8900 1)" font-size="5.9" fill="#3c4554" text-anchor="start">12</text>
<text transform="translate(683.25 383.86) scale(0.8900 1)" font-size="5.9" fill="#3c4554" text-anchor="start">Components</text>
<text x="635.50" y="418.80" font-size="8.3" fill="#1c2330" text-anchor="start" textLength="49.50" lengthAdjust="spacingAndGlyphs" stroke="#1c2330" stroke-width="0.45">Raw Materials</text>
<text transform="translate(640.00 435.70) scale(0.9000 1)" font-size="5.9" fill="#545f70" text-anchor="start" stroke="#545f70" stroke-width="0.1">ID</text>
<text transform="translate(683.25 435.70) scale(0.9000 1)" font-size="5.9" fill="#545f70" text-anchor="start" stroke="#545f70" stroke-width="0.1">Forecast Model</text>
<text transform="translate(954.75 435.70) scale(0.9000 1)" font-size="5.9" fill="#545f70" text-anchor="start" stroke="#545f70" stroke-width="0.1">is used</text>
<text transform="translate(1020.50 435.70) scale(0.9000 1)" font-size="5.9" fill="#545f70" text-anchor="start" stroke="#545f70" stroke-width="0.1">is validated</text>
<text transform="translate(1086.25 435.70) scale(0.9000 1)" font-size="5.9" fill="#545f70" text-anchor="start" stroke="#545f70" stroke-width="0.1">is fallback</text>
<text transform="translate(640.00 450.36) scale(0.8900 1)" font-size="5.9" fill="#3c4554" text-anchor="start">13</text>
<text transform="translate(683.25 450.36) scale(0.8900 1)" font-size="5.9" fill="#3c4554" text-anchor="start">Raw Materials</text>
<text x="635.50" y="484.80" font-size="8.3" fill="#1c2330" text-anchor="start" textLength="73.25" lengthAdjust="spacingAndGlyphs" stroke="#1c2330" stroke-width="0.45">NPI und EOL Models</text>
<text transform="translate(640.00 501.70) scale(0.9000 1)" font-size="5.9" fill="#545f70" text-anchor="start" stroke="#545f70" stroke-width="0.1">ID</text>
<text transform="translate(683.25 501.70) scale(0.9000 1)" font-size="5.9" fill="#545f70" text-anchor="start" stroke="#545f70" stroke-width="0.1">Forecast Model</text>
<text transform="translate(954.75 501.70) scale(0.9000 1)" font-size="5.9" fill="#545f70" text-anchor="start" stroke="#545f70" stroke-width="0.1">is used</text>
<text transform="translate(1020.50 501.70) scale(0.9000 1)" font-size="5.9" fill="#545f70" text-anchor="start" stroke="#545f70" stroke-width="0.1">is validated</text>
<text transform="translate(1086.25 501.70) scale(0.9000 1)" font-size="5.9" fill="#545f70" text-anchor="start" stroke="#545f70" stroke-width="0.1">is fallback</text>
<text transform="translate(640.00 516.36) scale(0.8900 1)" font-size="5.9" fill="#3c4554" text-anchor="start">18</text>
<text transform="translate(683.25 516.36) scale(0.8900 1)" font-size="5.9" fill="#3c4554" text-anchor="start">NPI Clustering</text>
<text transform="translate(640.00 528.58) scale(0.8900 1)" font-size="5.9" fill="#3c4554" text-anchor="start">19</text>
<text transform="translate(683.25 528.58) scale(0.8900 1)" font-size="5.9" fill="#3c4554" text-anchor="start">NPI Launches</text>
</svg>
</body></html>
